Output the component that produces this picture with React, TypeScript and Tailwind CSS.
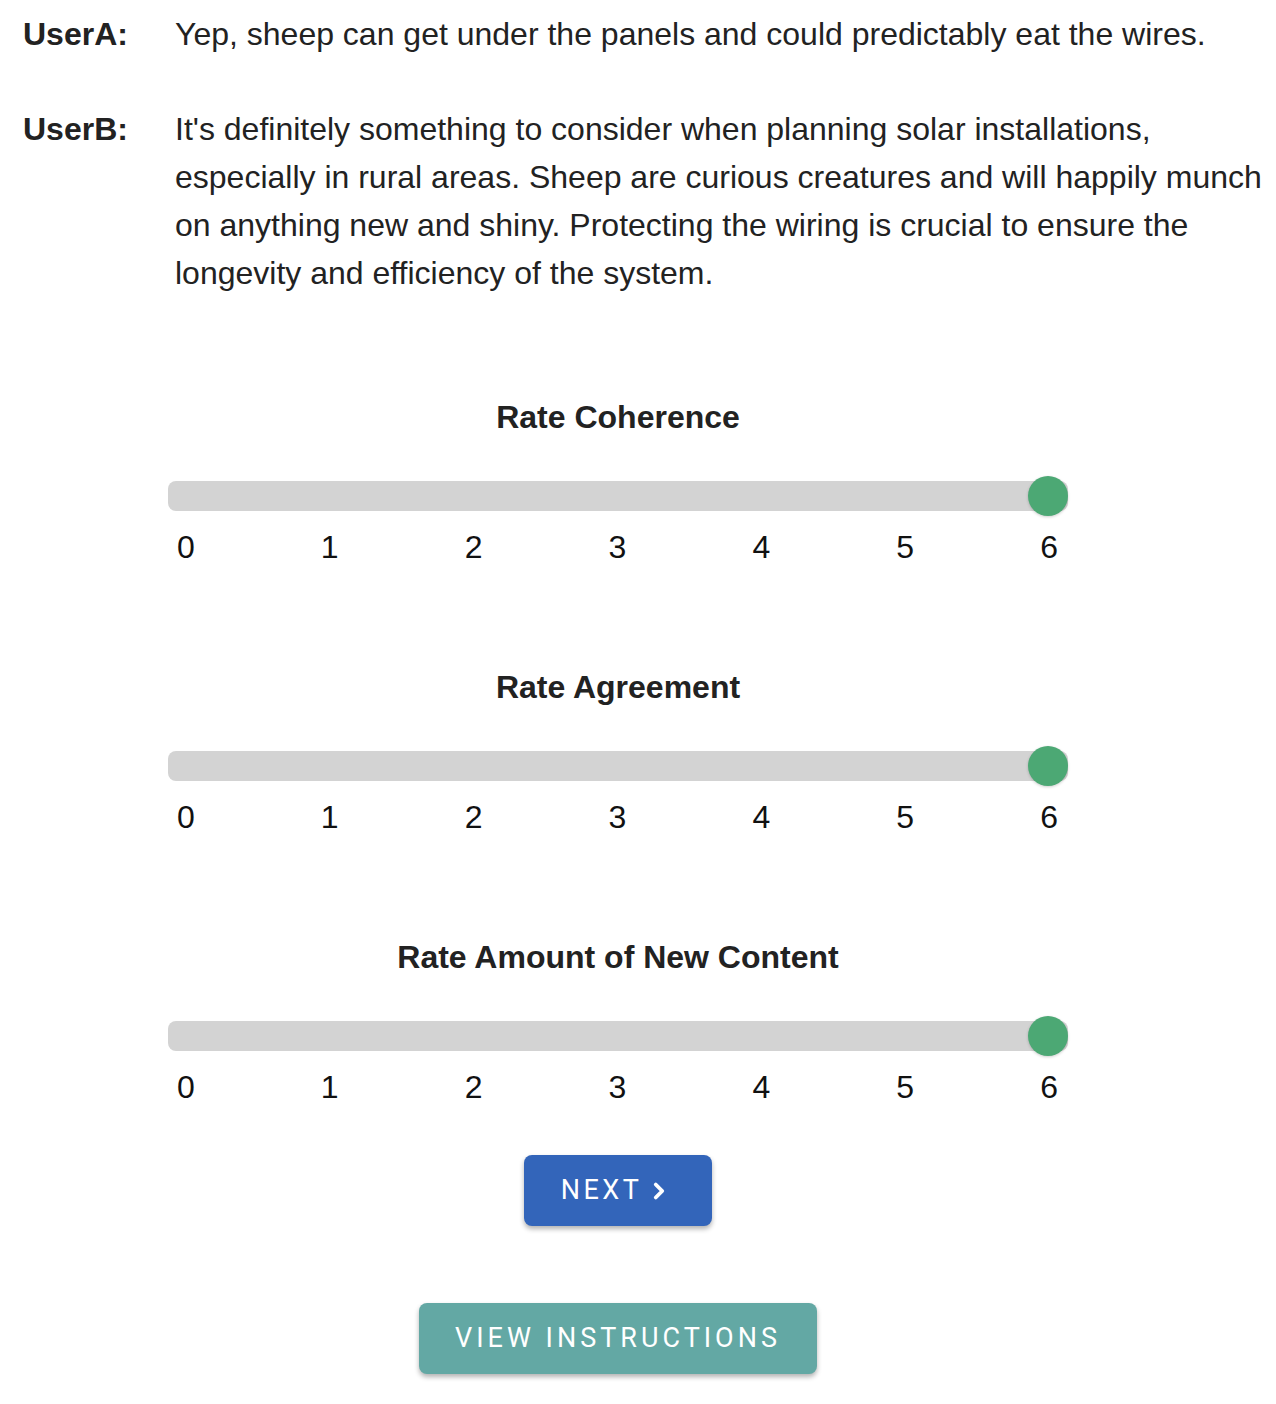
import { ChevronRight } from "lucide-react";

type Turn = {
  speaker: string;
  lines: string[];
};

const turns: Turn[] = [
  {
    speaker: "UserA:",
    lines: ["Yep, sheep can get under the panels and could predictably eat the wires."],
  },
  {
    speaker: "UserB:",
    lines: [
      "It's definitely something to consider when planning solar installations,",
      "especially in rural areas. Sheep are curious creatures and will happily munch",
      "on anything new and shiny. Protecting the wiring is crucial to ensure the",
      "longevity and efficiency of the system.",
    ],
  },
];

const ratings = ["Rate Coherence", "Rate Agreement", "Rate Amount of New Content"];
const ticks = [0, 1, 2, 3, 4, 5, 6];

const RatingSlider = ({ title, value }: { title: string; value: number }) => {
  const pct = (value / 6) * 100;
  return (
    <div className="mb-[92px] last:mb-0">
      <h3 className="text-center text-[32px] leading-[48px] font-bold text-[#222]">{title}</h3>
      <div className="relative mt-[35px] h-[40px]">
        <div className="absolute left-0 right-0 top-[5px] h-[30px] rounded-[8px] bg-[#d3d3d3]" />
        <div className="absolute inset-y-0 left-[20px] right-[20px]">
          <div
            className="absolute top-0 h-[40px] w-[40px] -translate-x-1/2 rounded-full bg-[#4ca874] shadow-[0_1px_3px_rgba(0,0,0,0.2)]"
            style={{ left: `${pct}%` }}
          />
        </div>
      </div>
      <div className="mt-[7px] ml-[9px] mr-[10px] flex justify-between text-[32px] leading-[48px] text-[#111]">
        {ticks.map((t) => (
          <span key={t}>{t}</span>
        ))}
      </div>
    </div>
  );
};

export default function App() {
  return (
    <div className="min-h-[1404px] bg-white pt-[10px] font-['Liberation_Sans',Arial,sans-serif] text-[#222]">
      {turns.map((turn) => (
        <div key={turn.speaker} className="mb-[47px] flex pl-[23px]">
          <div className="w-[152px] shrink-0 text-[32px] leading-[48px] font-bold">{turn.speaker}</div>
          <div className="text-[32px] leading-[48px]">
            {turn.lines.map((line) => (
              <div key={line} className="whitespace-nowrap">
                {line}
              </div>
            ))}
          </div>
        </div>
      ))}

      <div className="ml-[168px] mt-[96px] w-[900px] pb-[30px]">
        <div>
          {ratings.map((r) => (
            <RatingSlider key={r} title={r} value={6} />
          ))}
        </div>

        <div className="mt-[44px] flex justify-center">
          <button className="flex h-[71px] items-center gap-[10px] rounded-[8px] bg-[#3365ba] pl-[37px] pr-[40px] font-['Roboto',sans-serif] text-[27px] tracking-[3.5px] text-white shadow-[0_3px_5px_rgba(0,0,0,0.3)]">
            NEXT
            <ChevronRight className="h-[26px] w-[26px] -ml-[6px]" strokeWidth={3.5} />
          </button>
        </div>

        <div className="mt-[77px] flex justify-center">
          <button className="flex h-[71px] items-center rounded-[8px] bg-[#63a8a4] px-[36px] font-['Roboto',sans-serif] text-[27px] tracking-[4px] text-white shadow-[0_3px_5px_rgba(0,0,0,0.3)]">
            VIEW INSTRUCTIONS
          </button>
        </div>
      </div>
    </div>
  );
}
